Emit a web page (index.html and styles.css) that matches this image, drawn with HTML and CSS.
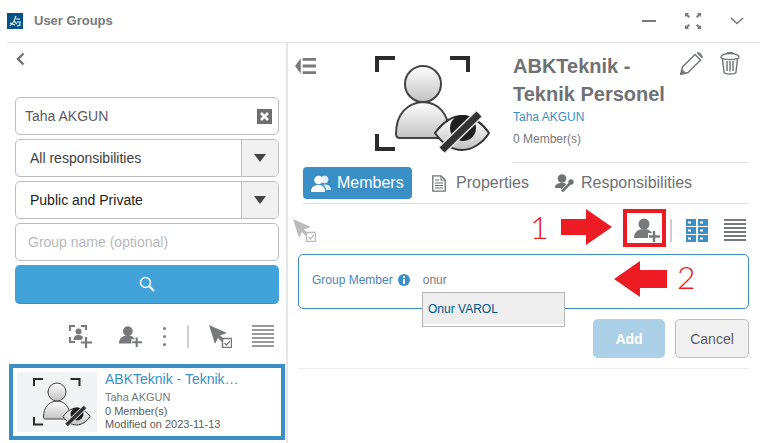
FILE: index.html
```html
<!DOCTYPE html>
<html lang="en">
<head>
    <meta charset="UTF-8">
    <title>User Groups</title>
    <link rel="stylesheet" href="styles.css">
</head>
<body>
    <svg class="defs" width="0" height="0">
        <defs>
            <linearGradient id="skin" x1="0" y1="0" x2="0" y2="1">
                <stop offset="0" stop-color="#ffffff"/>
                <stop offset="1" stop-color="#c2c2c2"/>
            </linearGradient>
            <symbol id="group-art" viewBox="0 0 116 98">
                <path d="M2 16V2H20M75 2H93V16M2 78V93H20" fill="none" stroke="#2b2b2b" stroke-width="4"/>
                <path d="M21 78C21 58 32 47 48 46C64 47 72 56 76 78C76 81 74 82 71 82H25C22 82 21 81 21 78Z" fill="url(#skin)" stroke="#444" stroke-width="2"/>
                <circle cx="48" cy="28" r="18" fill="url(#skin)" stroke="#444" stroke-width="2"/>
                <path d="M60 77C68 66 78 60 87 60C98 60 108 68 114 77C108 87 97 94 87 94C76 94 67 87 60 77Z" fill="url(#skin)" stroke="#333" stroke-width="2"/>
                <circle cx="88" cy="72" r="13" fill="#1f1f1f"/>
                <path d="M67 94L104 58" stroke="#e8e8e8" stroke-width="10"/>
                <path d="M67 94L104 58" stroke="#333" stroke-width="7"/>
            </symbol>
            <symbol id="user-plus" viewBox="0 0 26 24">
                <circle cx="10" cy="6" r="5.5"/>
                <path d="M0 20C0 14 4 11 10 11C14 11 17 13 18 15H14V20Z"/>
                <path d="M20 13V24M15 18.5H26" fill="none" stroke="currentColor" stroke-width="2.4"/>
            </symbol>
            <symbol id="cursor-check" viewBox="0 0 23 23">
                <path d="M0 0L18 8L11 10.500L16 15L13.500 17.500L9 13L6 19Z"/>
                <rect x="13.500" y="13.500" width="9" height="9" fill="#fff" stroke="currentColor" stroke-width="1.500"/>
                <path d="M15.500 18L17.500 20L21 16" fill="none" stroke="currentColor" stroke-width="1.300"/>
            </symbol>
            <symbol id="lines" viewBox="0 0 22 22">
                <path d="M0 1H22M0 5H22M0 9H22M0 13H22M0 17H22M0 21H22" stroke="currentColor" stroke-width="1.800"/>
            </symbol>
        </defs>
    </svg>

    <div class="app">
        <header class="topbar">
            <svg class="logo" viewBox="0 0 16 16">
                <rect width="16" height="16" fill="#005386"/>
                <path d="M3 13L7 8L9 3M7 8L10 11M3 10L8 12M9 6H13M10 9H13V12L10 13" fill="none" stroke="#fff" stroke-width="1.100"/>
            </svg>
            <h1 class="topbar-title">User Groups</h1>
            <div class="window-actions">
                <svg class="win-min" viewBox="0 0 14 2"><rect width="14" height="2"/></svg>
                <svg class="win-max" viewBox="0 0 16 16"><path d="M0 0H4L2.800 1.200L5 3.500L3.500 5L1.200 2.800L0 4ZM16 0V4L14.800 2.800L12.500 5L11 3.500L13.200 1.200L12 0ZM0 16V12L1.200 13.200L3.500 11L5 12.500L2.800 14.800L4 16ZM16 16H12L13.200 14.800L11 12.500L12.500 11L14.800 13.200L16 12Z"/></svg>
                <svg class="win-down" viewBox="0 0 14 8"><path d="M1 1L7 6.500L13 1" fill="none" stroke="currentColor" stroke-width="1.500"/></svg>
            </div>
        </header>

        <div class="panes">
            <aside class="sidebar">
                <div class="back-row">
                    <svg class="back" viewBox="0 0 9 14"><path d="M7.500 1.500L2 7L7.500 12.500" fill="none" stroke="currentColor" stroke-width="2.400"/></svg>
                </div>
                <div class="filters">
                    <div class="field field-search">
                        <span>Taha AKGUN</span>
                        <svg class="clear" viewBox="0 0 15 15">
                            <rect width="15" height="15" fill="#6e6e73"/>
                            <path d="M4 4L11 11M11 4L4 11" stroke="#fff" stroke-width="2.600"/>
                        </svg>
                    </div>
                    <div class="field field-select">
                        <span class="select-value">All responsibilities</span>
                        <span class="select-arrow"></span>
                    </div>
                    <div class="field field-select">
                        <span class="select-value select-strong">Public and Private</span>
                        <span class="select-arrow"></span>
                    </div>
                    <div class="field field-placeholder">Group name (optional)</div>
                    <button class="search-btn">
                        <svg viewBox="0 0 16 16"><circle cx="6.500" cy="6.500" r="5" fill="none" stroke="#fff" stroke-width="1.500"/><path d="M10 10L15 15" stroke="#fff" stroke-width="2"/></svg>
                    </button>
                </div>
                <div class="side-tools">
                    <svg class="tool-scan" viewBox="0 0 23 23">
                        <path d="M1 6V1H6M12 1H17V5M1 12V17H6" fill="none" stroke="currentColor" stroke-width="2"/>
                        <circle cx="9.500" cy="6.500" r="3"/>
                        <path d="M4.500 15C4.500 11 7 10 9.500 10C12 10 14 11 14 13L12 15Z"/>
                        <path d="M17 12V23M12 17.500H23" stroke="currentColor" stroke-width="2.200"/>
                    </svg>
                    <svg class="tool-user"><use href="#user-plus"/></svg>
                    <span class="kebab"><i></i><i></i><i></i></span>
                    <span class="tool-sep"></span>
                    <svg class="tool-cursor"><use href="#cursor-check"/></svg>
                    <svg class="tool-lines"><use href="#lines"/></svg>
                </div>
                <article class="group-card">
                    <div class="card-art">
                        <svg><use href="#group-art"/></svg>
                    </div>
                    <div class="card-text">
                        <div class="card-title">ABKTeknik - Teknik…</div>
                        <div class="card-owner">Taha AKGUN</div>
                        <div class="card-line">0 Member(s)</div>
                        <div class="card-line">Modified on 2023-11-13</div>
                    </div>
                </article>
            </aside>

            <main class="detail">
                <section class="detail-head">
                    <svg class="collapse" viewBox="0 0 22 18">
                        <path d="M0 9L6 1V17Z"/>
                        <path d="M8 2H22M8 9H22M8 16H22" stroke="currentColor" stroke-width="3"/>
                    </svg>
                    <svg class="head-art"><use href="#group-art"/></svg>
                    <div class="head-info">
                        <div class="head-top">
                            <h2 class="head-title">ABKTeknik - Teknik Personel</h2>
                            <div class="head-actions">
                                <svg class="act-edit" viewBox="0 0 23 23">
                                    <path d="M0.500 22.500L2.500 15L15 2.500L20.500 8L8 20.500Z" fill="none" stroke="currentColor" stroke-width="1.500"/>
                                    <path d="M16.500 1L18 0C19.500 0 22.500 3 23 5L22 6.500Z"/>
                                    <path d="M0.500 22.500L2 17L6 21Z"/>
                                </svg>
                                <svg class="act-trash" viewBox="0 0 20 23">
                                    <path d="M1 5C1 3 5 1.500 10 1.500C15 1.500 19 3 19 5C19 6.500 15 7.500 10 7.500C5 7.500 1 6.500 1 5Z" fill="none" stroke="currentColor" stroke-width="1.500"/>
                                    <path d="M2.500 7L4 20C4 21.500 6 22 10 22C14 22 16 21.500 16 20L17.500 7M7 9V19M10 9V19.500M13 9V19M7 1.500L8 0.500H12L13 1.500" fill="none" stroke="currentColor" stroke-width="1.500"/>
                                </svg>
                            </div>
                        </div>
                        <div class="head-owner">Taha AKGUN</div>
                        <div class="head-count">0 Member(s)</div>
                    </div>
                </section>

                <nav class="tabs">
                    <a class="tab tab-active">
                        <svg class="tab-icon-members" viewBox="0 0 20 17">
                            <circle cx="13.500" cy="4.500" r="3.800" opacity="0.850"/>
                            <path d="M14 9.500C17 9.500 20 11 20 15H15C15 12.500 14 11 12 10Z" opacity="0.850"/>
                            <circle cx="7.500" cy="5" r="4.300"/>
                            <path d="M0 17C0 12 3 10 7.500 10C12 10 14 12 14 17Z"/>
                        </svg>
                        Members
                    </a>
                    <a class="tab">
                        <svg class="tab-icon-props" viewBox="0 0 14 17">
                            <path d="M0.800 0.800H9L13.200 5V16.200H0.800Z" fill="none" stroke="currentColor" stroke-width="1.300"/>
                            <path d="M9 0.800V5H13.200M3 5H7M3 8H11M3 10.500H11M3 13H11" fill="none" stroke="currentColor" stroke-width="1.100"/>
                        </svg>
                        Properties
                    </a>
                    <a class="tab">
                        <svg class="tab-icon-resp" viewBox="0 0 19 18">
                            <circle cx="7" cy="4.500" r="4.300"/>
                            <path d="M0 14C0 10 3 9 7 9C9 9 10.500 9.300 11.500 10L6 15.500V14Z"/>
                            <path d="M7 17.500L15 9.500" stroke="currentColor" stroke-width="2.500"/>
                            <circle cx="16" cy="8" r="2.700"/>
                        </svg>
                        Responsibilities
                    </a>
                </nav>

                <div class="member-tools">
                    <svg class="tool-cursor tool-disabled"><use href="#cursor-check"/></svg>
                    <div class="member-tools-right">
                        <svg class="tool-user-big"><use href="#user-plus"/></svg>
                        <span class="tool-sep"></span>
                        <svg class="tool-grid" viewBox="0 0 22 23">
                            <path d="M0 0H10V7H0ZM12 0H22V7H12ZM0 8H10V15H0ZM12 8H22V15H12ZM0 16H10V23H0ZM12 16H22V23H12Z"/>
                            <path d="M2 2.500H5V4.500H2ZM14 2.500H17V4.500H14ZM2 10.500H5V12.500H2ZM14 10.500H17V12.500H14ZM2 18.500H5V20.500H2ZM14 18.500H17V20.500H14Z" fill="#fff"/>
                        </svg>
                        <svg class="tool-lines tool-lines-dark"><use href="#lines"/></svg>
                    </div>
                </div>

                <div class="member-box">
                    <label class="member-label">Group Member</label>
                    <svg class="info" viewBox="0 0 12 12">
                        <circle cx="6" cy="6" r="6" fill="#3a8fc7"/>
                        <path d="M6 5V10M6 2V3.800" stroke="#fff" stroke-width="2"/>
                    </svg>
                    <span class="member-input">onur</span>
                    <ul class="suggest">
                        <li>Onur VAROL</li>
                    </ul>
                </div>

                <div class="form-actions">
                    <button class="btn btn-add">Add</button>
                    <button class="btn btn-cancel">Cancel</button>
                </div>
                <div class="end-line"></div>
            </main>
        </div>

        <!-- annotations drawn over the screenshot -->
        <span class="mark mark-one">1</span>
        <svg class="arrow arrow-one" viewBox="0 0 51 36"><path d="M0 10H25V0L51 18L25 36V26H0Z"/></svg>
        <span class="mark-box"></span>
        <svg class="arrow arrow-two" viewBox="0 0 53 36"><path d="M53 9H26V0L0 18L26 36V27H53Z"/></svg>
        <span class="mark mark-two">2</span>
    </div>
</body>
</html>
```

FILE: styles.css
```css
* {
    margin: 0;
    padding: 0;
    box-sizing: border-box;
}

body {
    font-family: "Liberation Sans", Arial, sans-serif;
    background: #fff;
    color: #333;
    overflow: hidden;
}

svg {
    display: block;
    fill: currentColor;
}

.defs {
    position: absolute;
}

.app {
    position: relative;
    width: 766px;
    height: 443px;
    padding: 0 7px;
    display: flex;
    flex-direction: column;
}

/* top bar */
.topbar {
    height: 43px;
    flex: none;
    display: flex;
    align-items: center;
    border-bottom: 1px solid #e2e2e2;
    padding-bottom: 1px;
}

.logo {
    width: 16px;
    height: 16px;
}

.topbar-title {
    margin-left: 11px;
    font-size: 13px;
    font-weight: bold;
    color: #77797c;
}

.window-actions {
    margin-left: auto;
    display: flex;
    align-items: center;
    color: #77797c;
}

.win-min {
    width: 14px;
    height: 2px;
    margin-right: 29px;
}

.win-max {
    width: 16px;
    height: 16px;
    margin-right: 29px;
}

.win-down {
    width: 14px;
    height: 8px;
    margin-right: 15px;
}

/* left pane */
.panes {
    flex: 1;
    display: flex;
    min-height: 0;
}

.sidebar {
    width: 281px;
    flex: none;
    padding: 0 8px;
    border-right: 2px solid #e6e6e6;
}

.back-row {
    height: 54px;
    padding-top: 9px;
    color: #6f7174;
}

.back {
    width: 9px;
    height: 14px;
    margin-left: 1px;
}

.filters {
    width: 264px;
    display: flex;
    flex-direction: column;
    gap: 4px;
}

.field {
    height: 38px;
    border: 1px solid #bcbcbc;
    border-radius: 5px;
    font-size: 14px;
    display: flex;
    align-items: center;
    overflow: hidden;
}

.field-search {
    padding: 0 6px 0 9px;
    justify-content: space-between;
    color: #5b5b60;
}

.clear {
    width: 15px;
    height: 15px;
}

.select-value {
    flex: 1;
    padding-left: 14px;
    color: #3d3d3d;
}

.select-strong {
    color: #222;
}

.select-arrow {
    width: 37px;
    height: 100%;
    background: #f1f1f1;
    border-left: 1px solid #bcbcbc;
    display: flex;
    align-items: center;
    justify-content: center;
}

.select-arrow::after {
    content: "";
    border-left: 6px solid transparent;
    border-right: 6px solid transparent;
    border-top: 8px solid #444;
}

.field-placeholder {
    padding-left: 12px;
    color: #b9b9bd;
}

.search-btn {
    height: 39px;
    border: none;
    border-bottom: 1px solid #3a8fc7;
    border-radius: 5px;
    background: #42a2da;
    display: flex;
    align-items: center;
    justify-content: center;
}

.search-btn svg {
    width: 16px;
    height: 16px;
}

.side-tools {
    height: 60px;
    display: flex;
    align-items: center;
    justify-content: flex-end;
    padding: 4px 4px 0 0;
    color: #77797c;
}

.tool-scan {
    width: 23px;
    height: 23px;
    margin-right: 27px;
}

.tool-user {
    width: 23px;
    height: 23px;
    margin-right: 21px;
}

.kebab {
    display: flex;
    flex-direction: column;
    gap: 5px;
    margin-right: 21px;
}

.kebab i {
    width: 3px;
    height: 3px;
    border-radius: 50%;
    background: #77797c;
}

.tool-sep {
    width: 2px;
    height: 23px;
    background: #cfcfcf;
}

.tool-cursor {
    width: 23px;
    height: 23px;
    margin-left: 20px;
    margin-right: 20px;
}

.tool-lines {
    width: 22px;
    height: 22px;
    color: #9a9a9a;
}

.group-card {
    width: 276px;
    height: 76px;
    margin-left: -6px;
    border: 4px solid #3a8fc7;
    padding: 4px;
    display: flex;
}

.card-art {
    width: 80px;
    height: 60px;
    background: #f2f3f5;
    padding: 6px 0 0 16px;
    flex: none;
}

.card-art svg {
    width: 58px;
    height: 49px;
}

.card-text {
    margin-left: 8px;
    min-width: 0;
    font-size: 11px;
    line-height: 13.500px;
    color: #5b5b60;
}

.card-title {
    font-size: 14px;
    line-height: 18px;
    margin-top: -2px;
    margin-bottom: 3px;
    color: #3a8fc7;
    white-space: nowrap;
}

.card-owner {
    color: #77797c;
}

/* right pane */
.detail {
    flex: 1;
    min-width: 0;
    padding: 0 10px 0 7px;
}

.detail-head {
    display: flex;
    height: 120px;
}

.collapse {
    width: 21px;
    height: 18px;
    margin-top: 14px;
    color: #77797c;
    flex: none;
}

.head-art {
    width: 116px;
    height: 98px;
    margin: 13px 22px 0 59px;
    flex: none;
}

.head-info {
    flex: 1;
    padding-top: 9px;
    border-bottom: 1px solid #e2e2e2;
}

.head-top {
    display: flex;
    justify-content: space-between;
}

.head-title {
    width: 160px;
    font-size: 20px;
    line-height: 28px;
    font-weight: bold;
    color: #6f7174;
}

.head-actions {
    display: flex;
    gap: 17px;
    color: #77797c;
    padding-right: 9px;
}

.act-edit {
    width: 23px;
    height: 23px;
}

.act-trash {
    width: 20px;
    height: 23px;
}

.head-owner {
    font-size: 12px;
    line-height: 18px;
    color: #3a8fc7;
}

.head-count {
    margin-top: 4px;
    font-size: 12px;
    line-height: 18px;
    color: #77797c;
}

.tabs {
    margin: 4px 0 0 8px;
    height: 37px;
    padding-bottom: 4px;
    display: flex;
    border-bottom: 1px solid #e2e2e2;
}

.tab {
    display: flex;
    align-items: center;
    font-size: 16px;
    color: #6f7174;
    margin-right: 26px;
}

.tab-active {
    width: 109px;
    padding-left: 8px;
    background: #3a8fc7;
    border-radius: 4px;
    color: #fff;
    margin-right: 20px;
}

.tab svg {
    height: 17px;
    margin-right: 7px;
    flex: none;
}

.tab-icon-members {
    width: 20px;
    margin-right: 6px !important;
}

.tab-icon-props {
    width: 14px;
    margin-right: 10px !important;
}

.tab-icon-resp {
    width: 19px;
    height: 18px !important;
}

.member-tools {
    height: 50px;
    padding-top: 2px;
    display: flex;
    align-items: center;
    justify-content: space-between;
}

.tool-disabled {
    margin: 0 0 0 -2px;
    color: #bcbcbc;
}

.member-tools-right {
    display: flex;
    align-items: center;
    padding-right: 3px;
    color: #77797c;
}

.tool-user-big {
    width: 26px;
    height: 24px;
    margin-right: 10px;
}

.tool-grid {
    width: 22px;
    height: 23px;
    margin: 0 16px 0 14px;
    color: #3a8fc7;
}

.tool-lines-dark {
    color: #77797c;
}

.member-box {
    position: relative;
    margin-left: 3px;
    height: 55px;
    border: 1px solid #3a8fc7;
    border-radius: 5px;
    padding: 0 13px 3px;
    display: flex;
    align-items: center;
    font-size: 12px;
}

.member-label {
    color: #4a86b8;
}

.info {
    width: 12px;
    height: 12px;
    margin-left: 5px;
}

.member-input {
    margin-left: 13px;
    color: #77797c;
}

.suggest {
    position: absolute;
    left: 123px;
    top: 37px;
    width: 143px;
    height: 35px;
    list-style: none;
    background: #fff;
    border: 1px solid #b5b5b5;
    z-index: 2;
}

.suggest li {
    height: 31px;
    line-height: 32px;
    padding-left: 5px;
    background: #eee;
    color: #00588c;
}

.form-actions {
    margin-top: 10px;
    display: flex;
    justify-content: flex-end;
    gap: 10px;
}

.btn {
    height: 39px;
    border-radius: 5px;
    font-family: inherit;
    font-size: 14px;
}

.btn-add {
    width: 72px;
    border: none;
    background: #acd0e8;
    color: #fff;
    font-weight: bold;
}

.btn-cancel {
    width: 74px;
    border: 1px solid #bcbcbc;
    background: #f1f1f1;
    color: #5b5b60;
}

.end-line {
    margin: 10px 0 0 3px;
    border-top: 1px solid #eee;
}

/* red annotations */
.mark {
    position: absolute;
    font-family: Lato, sans-serif;
    font-size: 32px;
    line-height: 36px;
    font-weight: 300;
    color: #ed1c24;
}

.mark-one {
    left: 530px;
    top: 209px;
}

.mark-two {
    left: 677px;
    top: 259px;
}

.arrow {
    position: absolute;
    fill: #ed1c24;
}

.arrow-one {
    left: 561px;
    top: 209px;
    width: 51px;
    height: 36px;
}

.arrow-two {
    left: 614px;
    top: 261px;
    width: 53px;
    height: 36px;
}

.mark-box {
    position: absolute;
    left: 623px;
    top: 209px;
    width: 43px;
    height: 38px;
    border: 4px solid #ed1c24;
}
```
